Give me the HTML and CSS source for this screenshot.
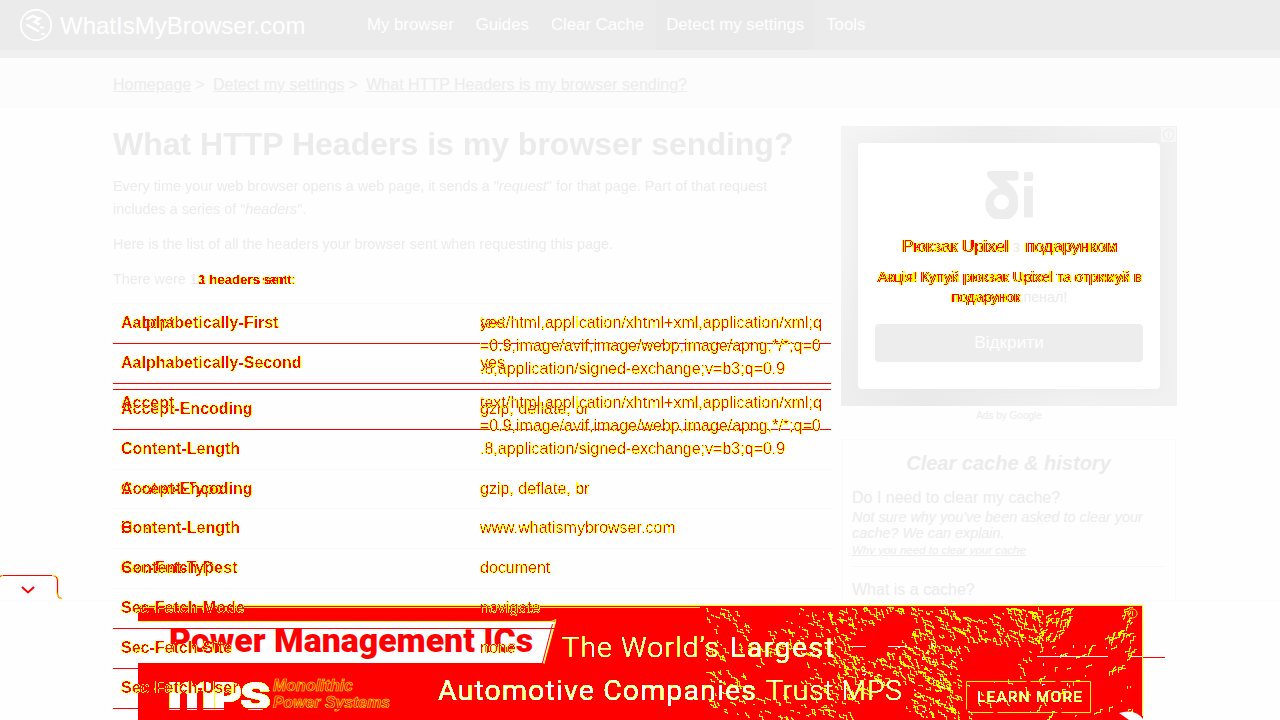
FILE: index.html
```html
<!DOCTYPE html>
<html lang="en">
<head>
<meta charset="utf-8">
<title>What HTTP Headers is my browser sending?</title>
<link rel="stylesheet" href="styles.css">
</head>
<body>
<svg class="defs" width="0" height="0" aria-hidden="true">
  <filter id="diff" x="-5%" y="-20%" width="110%" height="140%" color-interpolation-filters="sRGB">
    <feColorMatrix values="0 0 0 0 1  0 0 0 1 0  0 0 0 0 0  0 0 0 1 0"/>
    <feComponentTransfer><feFuncG type="discrete" tableValues="1 1 1 1 0"/><feFuncA type="discrete" tableValues="0 1 1 1 1 1 1 1 1 1 1 1"/></feComponentTransfer>
  </filter>
  <filter id="edge" x="-5%" y="-20%" width="110%" height="140%" color-interpolation-filters="sRGB">
    <feColorMatrix values="0 0 0 0 1  0 0 0 0 1  0 0 0 1 0  0 0 0 1 0"/>
    <feComponentTransfer><feFuncB type="discrete" tableValues="0 0 1"/><feFuncA type="discrete" tableValues="0 1 1 1 1 1 1 1 1 1 1 1"/></feComponentTransfer>
  </filter>
</svg>

<header class="header">
  <a class="brand">
    <svg width="32" height="32" viewBox="0 0 32 32" fill="none" stroke="#fff">
      <circle cx="16" cy="16" r="15.2" stroke-width="1.7"/>
      <path d="M6.500 10.500l6-3.500 7 2.500-5 3.500 5 2.500M6.500 15.500l12.500 7" stroke-width="2.500"/>
      <path d="M20 18.500h4M21 25h4" stroke-width="2"/>
    </svg>
    <span>WhatIsMyBrowser.com</span>
  </a>
  <nav class="nav"><a>My browser</a><a>Guides</a><a>Clear Cache</a><a class="active">Detect my settings</a><a>Tools</a></nav>
</header>

<div class="crumbs"><u>Homepage</u><i>&gt;</i><u>Detect my settings</u><i>&gt;</i><u>What HTTP Headers is my browser sending?</u></div>

<div class="page">
  <main class="main">
    <h1>What HTTP Headers is my browser sending?</h1>
    <p class="intro">Every time your web browser opens a web page, it sends a "<em>request</em>" for that page. Part of that request<br>includes a series of "<em>headers</em>".</p>
    <p>Here is the list of all the headers your browser sent when requesting this page.</p>
    <p class="count">There were 1<span class="stack diff"><span>3 headers sent:</span><span class="nudge">1 headers sent:</span></span></p>
    <div class="tables">
      <div class="table">
        <div class="row tall red"><b>Accept</b><span>text/html,application/xhtml+xml,application/xml;q<br>=0.9,image/avif,image/webp,image/apng,*/*;q=0<br>.8,application/signed-exchange;v=b3;q=0.9</span></div>
        <div class="row red"><b>Accept-Encoding</b><span>gzip, deflate, br</span></div>
        <div class="row"><b>Content-Length</b><span></span></div>
        <div class="row short"><b>Content-Type</b><span></span></div>
        <div class="row"><b>Host</b><span>www.whatismybrowser.com</span></div>
        <div class="row"><b>Sec-Fetch-Dest</b><span>document</span></div>
        <div class="row red"><b>Sec-Fetch-Mode</b><span>navigate</span></div>
        <div class="row red"><b>Sec-Fetch-Site</b><span>none</span></div>
        <div class="row red"><b>Sec-Fetch-User</b><span></span></div>
      </div>
      <div class="table">
        <div class="row red"><b>Aalphabetically-First</b><span>yes</span></div>
        <div class="row red"><b>Aalphabetically-Second</b><span>yes</span></div>
        <div class="row tall"><b>Accept</b><span>text/html,application/xhtml+xml,application/xml;q<br>=0.9,image/avif,image/webp,image/apng,*/*;q=0<br>.8,application/signed-exchange;v=b3;q=0.9</span></div>
        <div class="row short"><b>Accept-Encoding</b><span>gzip, deflate, br</span></div>
        <div class="row"><b>Content-Length</b><span></span></div>
        <div class="row"><b>Content-Type</b><span></span></div>
      </div>
    </div>
  </main>

  <aside class="side">
    <div class="ad">
      <svg class="info" width="15" height="15" viewBox="0 0 15 15"><rect width="15" height="15" fill="#f8f8f8"/><circle cx="7.500" cy="7.500" r="5.300" fill="none" stroke="#ededed" stroke-width="1.200"/><path d="M7.500 4v1.500M7.500 6.500v4.500" stroke="#ededed" stroke-width="1.500"/></svg>
      <div class="card">
        <svg class="mark" width="50" height="48" viewBox="0 0 50 48" fill="#ededed">
          <path fill-rule="evenodd" d="M5 0H32q2.500 0 2.500 2.500V7q0 2.500-2.500 2.500H22C31 17 34 22 34 30.500A16.500 16.500 0 1 1 14.500 17L4.500 7Q3 5.500 3 3 3 0 5 0ZM17.500 23.500a7.500 7.500 0 1 0 .01 0Z"/>
          <rect x="40" y="1" width="9" height="9" rx="1.500"/><rect x="40" y="15" width="9" height="31.500" rx="1.500"/>
        </svg>
        <div class="offer title stack"><span class="diff">Рюкзак Upixel <em>з</em> подарунком</span><span class="ghost diff">Рюкзак Upixel <em>з</em> подарунком</span><span><em>Рюкзак Upixel</em> з <em>подарунком</em></span></div>
        <div class="offer text stack"><span class="diff">Акція! Купуй рюкзак Upixel та отримуй в<br>подарунок <em>пенал!</em></span><span class="ghost diff">Акція! Купуй рюкзак Upixel та отримуй в<br>подарунок <em>пенал!</em></span><span><em>Акція! Купуй рюкзак Upixel та отримуй в</em><br><em>подарунок</em> пенал!</span></div>
        <div class="open">Відкрити</div>
      </div>
    </div>
    <div class="adsby">Ads by Google</div>
    <section class="panel">
      <h2>Clear cache &amp; history</h2>
      <h3>Do I need to clear my cache?</h3>
      <p class="explain">Not sure why you've been asked to clear your cache? We can explain.</p>
      <p class="more">Why you need to clear your cache</p>
      <hr>
      <h3>What is a cache?</h3>
      <p class="explain diff late">Before you consider cleaning it, you should</p>
      <div class="rule"></div>
    </section>
  </aside>
</div>

<div class="dock">
  <svg class="handle" width="64" height="26" viewBox="0 0 64 26" fill="none">
    <path d="M0 2Q1 .500 3 .500H52Q57.500 .500 57.500 6V18Q57.500 23.500 62 23.500" stroke="red" stroke-width="1.200"/>
    <path d="M0 2.500Q1 1 3 .500M52 .500Q58.500 0 58.500 6M56.500 16Q57 23.500 62.500 24" stroke="#ff0"/>
    <path d="M22 12l6 5.500 6-5.500" stroke="red" stroke-width="2"/>
  </svg>
  <svg class="banner" width="1005" height="115" viewBox="138 605 1005 115">
    <rect x="138" y="605" width="1005" height="115" fill="red"/>
    <path d="M138 605.500H1143M138 607.500H700M1142.500 605V716" stroke="#ff0"/>
    <g id="texture" fill="none" shape-rendering="crispEdges"></g>
    <path d="M138 621.500H556L544 663H138Z" fill="#fff"/>
    <path d="M138 621.500H551L556 619.500 544 664" fill="none" stroke="#ff0"/>
    <path d="M552.500 624L542.500 663" stroke="red"/>
    <path d="M851 646.500H866M888 646.500H907M1037 656.500H1108M1131 656.500H1142" stroke="#fff"/>
    <path d="M1119 713Q1135 708 1143 719V720H1129Z" fill="#fff"/>
    <text x="169" y="652" class="power" textLength="364" lengthAdjust="spacingAndGlyphs">Power Management ICs</text>
    <g filter="url(#edge)" fill="#fff">
      <text x="562" y="657" class="slogan light" textLength="157" lengthAdjust="spacing">The World’s</text>
      <text x="730" y="657" class="slogan" textLength="104" lengthAdjust="spacing">Largest</text>
      <text x="438" y="700" class="slogan" textLength="318" lengthAdjust="spacing">Automotive Companies</text>
      <text x="766" y="700" class="slogan light" textLength="136" lengthAdjust="spacing">Trust MPS</text>
      <text x="977" y="702" class="learn" textLength="105">LEARN MORE</text>
      <text y="710" class="mps"><tspan x="167" class="low" textLength="50" lengthAdjust="spacingAndGlyphs">m</tspan><tspan x="213" textLength="29" lengthAdjust="spacingAndGlyphs">P</tspan><tspan x="240" textLength="31" lengthAdjust="spacingAndGlyphs">S</tspan></text>
    </g>
    <g class="system"><text x="273" y="691" textLength="80" lengthAdjust="spacingAndGlyphs">Monolithic</text><text x="273" y="708" textLength="117" lengthAdjust="spacingAndGlyphs">Power Systems</text></g>
    <rect x="966.500" y="681.500" width="124" height="31" fill="none" stroke="#ff0" stroke-dasharray="60 4 25 5 90 4"/>
    <g fill="none" stroke="#ff0"><circle cx="1132.500" cy="613.500" r="4.500"/><path d="M1132.500 611v5"/></g>
  </svg>
</div>
<script src="texture.js"></script>
</body>
</html>
```

FILE: styles.css
```css
* { box-sizing: border-box; }
html, body { height: 720px; overflow: hidden; }
body { margin: 0; background: #fefefe; color: #ebebeb; font: 16px/23px "Liberation Sans", Arial, sans-serif; }
.defs { position: absolute; }
h1, h2, h3, p { margin: 0; }
.diff { filter: url(#diff); }
.stack { display: inline-grid; }
.stack > * { grid-area: 1 / 1; }

.header { height: 58px; display: flex; background: #ebebeb; border-bottom: 8px solid #f0f0f0; color: #fff; }
.brand { width: 357px; padding-left: 20px; display: flex; align-items: center; gap: 8px; font-size: 24px; white-space: nowrap; }
.nav { display: flex; align-items: stretch; gap: 2px; font-size: 16.8px; }
.nav a { padding: 0 10px; line-height: 49px; white-space: nowrap; }
.nav .active { background: #e9e9e9; }

.crumbs { height: 50px; padding: 15px 0 0 113px; display: flex; background: #fcfcfc; color: #ebebeb; white-space: nowrap; }
.crumbs i { width: 21.7px; padding-left: 4px; font-style: normal; }

.page { display: flex; gap: 10px; padding: 18px 0 0 113px; }
.main { width: 718px; font-size: 14.4px; position: relative; z-index: 2; }
h1 { font-size: 32px; line-height: 36px; white-space: nowrap; margin-bottom: 13px; }
.main p { margin-bottom: 12px; white-space: nowrap; }
.main .count { margin-bottom: 0; height: 35px; }
.count .stack { vertical-align: top; font-weight: bold; font-size: 13.4px; }
.nudge { padding-left: 1px; font-weight: normal; }

.tables { display: grid; border-top: 1px solid #f9f9f9; }
.table { grid-area: 1 / 1; font-size: 16px; }
.row { height: 40px; padding: 7px 8px 0; display: grid; grid-template-columns: 359px 1fr; border-bottom: 1px solid #f9f9f9; white-space: nowrap; }
.row.tall { height: 86px; }
.row.short { height: 39px; }
.row.red { border-color: red; }
.row b, .row span { filter: url(#diff); }

.side { width: 336px; }
.ad { height: 280px; padding: 17px; position: relative; background: radial-gradient(ellipse at 25% 100%, #e9e9e9, transparent 45%), radial-gradient(ellipse at 45% 0, #ebebeb, transparent 45%), linear-gradient(90deg, #f4f4f4, #f1f1f1); }
.info { position: absolute; right: 1px; top: 1px; }
.card { height: 246px; padding: 28px 17px 0; background: #fff; border-radius: 4px; box-shadow: 0 0 18px #ebebeb; text-align: center; display: flex; flex-direction: column; align-items: center; }
.mark { flex: none; }
.offer { color: #ebebeb; white-space: nowrap; }
.offer em { font-style: normal; color: transparent; }
.title { margin-top: 16px; font-size: 16.7px; line-height: 24px; }
.text { margin-top: 8px; font-size: 14.3px; line-height: 20px; }
.ghost { padding-left: 3px; }
.open { margin-top: 17px; width: 268px; height: 38px; line-height: 37px; border-radius: 4px; background: #ededed; color: #fff; font-size: 17.2px; flex: none; }
.adsby { height: 33px; padding-top: 1px; line-height: 18px; font-size: 10px; text-align: center; }
.panel { margin: 0 1px; height: 300px; padding: 11px 10px 0 9px; border: 1px solid #fafafa; }
h2 { font-size: 20px; line-height: 24px; font-style: italic; text-align: center; margin-bottom: 12px; }
h3 { font-size: 16px; font-weight: normal; line-height: 22px; }
.explain { font-size: 14.4px; line-height: 16px; font-style: italic; }
.late { white-space: nowrap; }
.more { font-size: 11.5px; line-height: 18px; font-style: italic; text-decoration: underline; }
hr { border: 0; border-top: 1px solid #f7f7f7; margin: 7px 0 12px; }
.rule { margin-top: 40px; border-top: 1px solid red; position: relative; z-index: 2; margin-left: 291px; }

.dock { position: fixed; left: 0; right: 0; bottom: 0; height: 120px; padding: 4px 0 0 138px; background: #fefefe; border-top: 1px solid #fcfcfc; z-index: 1; }
.banner { display: block; }
.handle { position: absolute; left: 0; top: -26px; }
.power { font: 900 33px Roboto, sans-serif; fill: red; }
.slogan { font: 400 28.5px Roboto, sans-serif; }
.light { font-weight: 300; }
.learn { font: 400 15.5px Roboto, sans-serif; }
.mps { font: 900 39px Inter, sans-serif; }
.low { font-size: 51px; }
.system { font: italic bold 16px "Liberation Sans", sans-serif; fill: none; stroke: #ff0; stroke-width: .6; }
```

FILE: texture.js
```javascript
// Deterministic short stepped strokes, denser toward the right of the banner.
let seed = 71;
const rnd = () => (seed = (seed * 16807) % 2147483647) / 2147483647;
const draw = (count, color, maxSteps, left, top) => {
  let d = "";
  for (let i = 0; i < count; i++) {
    const x = Math.floor(left + rnd() * (1138 - left));
    const y = Math.floor(top + rnd() * (717 - top));
    if (x > 960 && y > 640 && rnd() < 0.8) continue;
    if (x < 830 && rnd() < 0.55) continue;
    if (Math.sin(x / 17) + Math.cos(y / 11 + x / 29) > 0.7) continue;
    d += `M${x + 0.5} ${y + 0.5}`;
    const dir = x > 1040 ? -1 : 1;
    const steps = 1 + Math.floor(rnd() * maxSteps);
    for (let s = 0; s < steps; s++) {
      d += rnd() < 0.5 ? `h${dir * Math.ceil(rnd() * 3)}v1` : `v${Math.ceil(rnd() * 3)}h${dir}`;
    }
  }
  const p = document.createElementNS("http://www.w3.org/2000/svg", "path");
  p.setAttribute("d", d);
  p.setAttribute("stroke", color);
  document.getElementById("texture").appendChild(p);
};
draw(1700, "#ff0", 4, 705, 607);
draw(110, "#fff", 1, 860, 640);
```
